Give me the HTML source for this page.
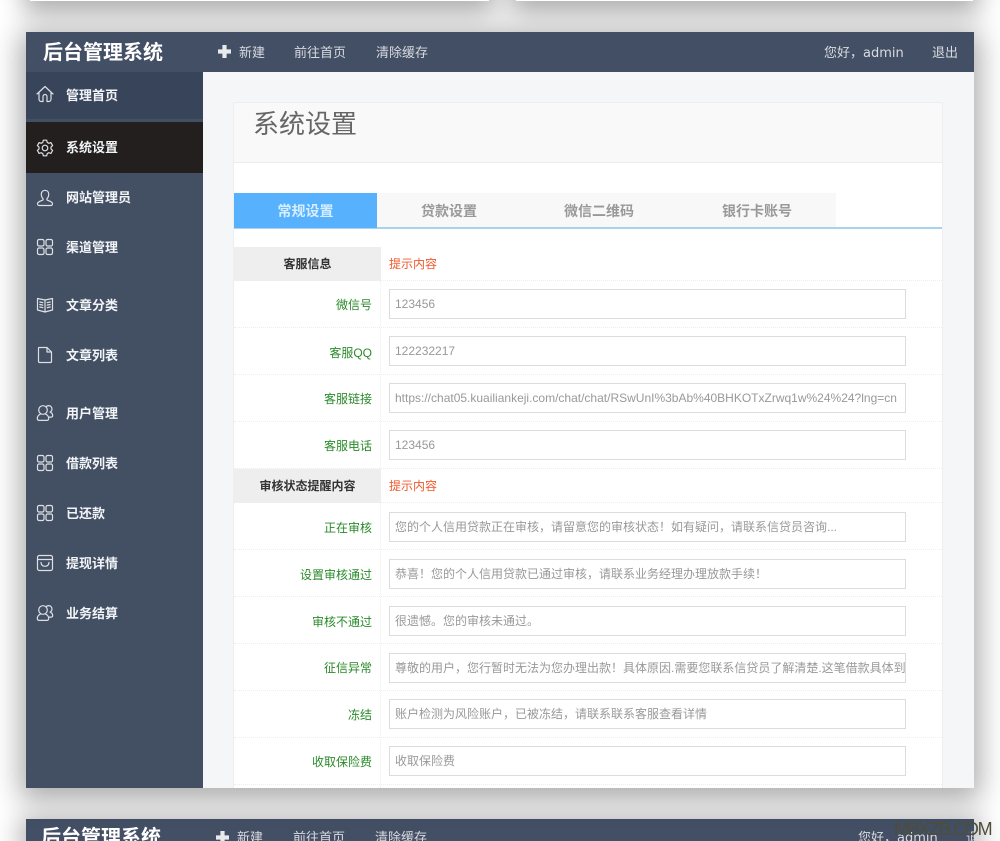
<!DOCTYPE html>
<html lang="zh-CN">
<head>
<meta charset="utf-8">
<title>后台管理系统</title>
<style>
html,body{margin:0;padding:0;background:#fff;width:1000px;height:841px;overflow:hidden}
body{font-family:"Liberation Sans","Noto Sans CJK SC",sans-serif}
#wrap{position:absolute;left:0;top:0;width:1000px;height:841px;overflow:hidden;background:#fff}
#wrap div,#wrap span,#wrap svg{position:absolute;box-sizing:border-box}
.t{white-space:nowrap}
.card{background:#fff;box-shadow:0 6px 26px 6px rgba(0,0,0,.33)}
.bar{background:#434f64}
.side{left:26px;top:72px;width:177px;height:716px;background:#434f63}
.m{left:66px;height:20px;line-height:20px;font-size:13px;font-weight:bold;color:#f2f5f7}
.i{left:36px;width:18px;height:18px;fill:none;stroke:#dde0e5;stroke-width:1.2;stroke-linecap:round;stroke-linejoin:round}
.n{height:20px;line-height:20px;font-size:13px;color:#d8dbe0;font-family:"DejaVu Sans","Noto Sans CJK SC",sans-serif}
.r{left:234px;width:708px;height:47px;border-bottom:1px dotted #eeeeee;background:#fff}
.sep{left:380px;width:1px;border-left:1px dotted #efefef}
.l{left:234px;width:138px;text-align:right;height:20px;line-height:20px;font-size:12px;color:#2a8a2a}
.h{left:234px;width:147px;background:#eeeeee;color:#333;font-size:12px;font-weight:bold;text-align:center}
.tip{left:389px;height:20px;line-height:20px;font-size:12px;color:#f0582d}
.in{left:389px;width:517px;height:30px;border:1px solid #dcdcdc;background:#fff;color:#999;font-size:12px;line-height:28px;padding-left:5px;overflow:hidden;white-space:nowrap}
.tab{top:193px;height:34px;line-height:37px;font-size:14px;font-weight:bold;color:#999;text-align:center}
</style>
</head>
<body>
<div id="wrap">
<svg width="0" height="0" style="left:0;top:0">
<symbol id="grid" viewBox="0 0 18 18"><rect x="1.5" y="1.5" width="6.5" height="6.5" rx="1.6"/><rect x="10" y="1.5" width="6.5" height="6.5" rx="1.6"/><rect x="1.5" y="10" width="6.5" height="6.5" rx="1.6"/><rect x="10" y="10" width="6.5" height="6.5" rx="1.6"/></symbol>
<symbol id="users" viewBox="0 0 18 18"><circle cx="7" cy="6" r="4.3"/><path d="M4.6 10C2.4 11 1.3 12.6 1.3 14.4c0 1.3.8 2 2 2h7.4c1.2 0 2-.7 2-2 0-1.8-1.1-3.4-3.3-4.4"/><path d="M10.2 2.6c.7-.7 1.6-1 2.4-1 2 0 3.4 1.6 3.4 3.4 0 1.4-.8 2.5-1.9 3.1 1.6.7 2.6 2 2.6 3.4 0 1-.6 1.6-1.6 1.6h-2"/></symbol>
</svg>

<!-- top fragments -->
<div class="card" style="left:30px;top:-40px;width:459px;height:41px"></div>
<div class="card" style="left:516px;top:-40px;width:457px;height:41px"></div>

<!-- bottom fragment -->
<div class="card bar" style="left:26px;top:819px;width:948px;height:22px"></div>

<!-- main card -->
<div class="card" style="left:26px;top:32px;width:948px;height:756px;background:#f5f6f8"></div>

<div class="t" style="left:41px;top:824px;font-size:20px;font-weight:bold;line-height:28px;color:#fff">后台管理系统</div>
<svg style="left:216px;top:831px" width="13" height="13" viewBox="0 0 13 13"><path d="M4.4 0h4.2v4.400H13v4.200H8.600V13H4.400V8.600H0V4.400h4.400z" fill="#e8e9ea"/></svg>
<div class="t n" style="left:237px;top:829px">新建</div>
<div class="t n" style="left:293px;top:829px">前往首页</div>
<div class="t n" style="left:375px;top:829px">清除缓存</div>
<div class="t n" style="left:858px;top:829px">您好，admin</div>
<div class="t n" style="left:966px;top:829px">退</div>
<div class="t" style="left:894px;top:819px;font-size:18px;line-height:21px;color:#4d4d3a;letter-spacing:-1.3px">MBXZB.COM</div>

<!-- top bar -->
<div class="bar" style="left:26px;top:32px;width:948px;height:40px"></div>
<div class="t" style="left:43px;top:39px;font-size:20px;font-weight:bold;line-height:28px;color:#fff">后台管理系统</div>
<svg style="left:218px;top:45px" width="13" height="13" viewBox="0 0 13 13"><path d="M4.4 0h4.2v4.400H13v4.200H8.600V13H4.400V8.600H0V4.400h4.400z" fill="#e8e9ea"/></svg>
<div class="t n" style="left:239px;top:44px">新建</div>
<div class="t n" style="left:294px;top:44px">前往首页</div>
<div class="t n" style="left:376px;top:44px">清除缓存</div>
<div class="t n" style="left:824px;top:44px">您好，admin</div>
<div class="t n" style="left:932px;top:44px">退出</div>

<!-- sidebar -->
<div class="side"></div>
<div style="left:26px;top:72px;width:177px;height:47px;background:#38445a"></div>
<div style="left:26px;top:122px;width:177px;height:51px;background:#231f1e"></div>

<svg class="i" style="top:85px" viewBox="0 0 18 18"><path d="M1 9 9 1.500 17 9M3 7.500V14c0 1.500.9 2.500 2.200 2.500H7V11.500c0-1.100.9-2 2-2s2 .9 2 2v5h1.800c1.300 0 2.200-1 2.200-2.500V7.500"/></svg>
<div class="t m" style="top:86px">管理首页</div>

<svg class="i" style="top:139px" viewBox="0 0 18 18"><path d="M7.300 1.200h3.400l.5 2.200 1.600.9 2.100-.7 1.700 3-1.600 1.500v1.800l1.600 1.500-1.700 3-2.100-.7-1.600.9-.5 2.200H7.300l-.5-2.200-1.600-.9-2.100.7-1.700-3 1.600-1.500V8.100L1.400 6.600l1.700-3 2.100.7 1.600-.9z"/><circle cx="9" cy="9" r="2.800"/></svg>
<div class="t m" style="top:138px">系统设置</div>

<svg class="i" style="top:189px" viewBox="0 0 18 18"><path d="M9 1.300c2.300 0 3.700 1.700 3.700 4 0 2-.7 3.500-1.800 4.500v1c0 .8 5.600 1.300 5.600 3.800 0 1.200-.6 1.900-1.800 1.900H3.300c-1.200 0-1.800-.7-1.800-1.900 0-2.500 5.600-3 5.600-3.800v-1C6 8.800 5.300 7.300 5.300 5.300c0-2.300 1.400-4 3.700-4z"/></svg>
<div class="t m" style="top:188px">网站管理员</div>

<svg class="i" style="top:238px"><use href="#grid"/></svg>
<div class="t m" style="top:238px">渠道管理</div>

<svg class="i" style="top:296px" viewBox="0 0 18 18"><path d="M1.500 2.500 9 4l7.500-1.500V14L9 16 1.500 14zM9 4v12M3.800 6l3 .6M3.800 8.500l3 .6M3.800 11l3 .6M14.200 6l-3 .6M14.200 8.500l-3 .6M14.200 11l-3 .6"/></svg>
<div class="t m" style="top:296px">文章分类</div>

<svg class="i" style="top:346px" viewBox="0 0 18 18"><path d="M3 1.500h8l4.500 4.500v9.500c0 .6-.4 1-1 1H3.500c-.6 0-1-.4-1-1V2c0-.3.2-.5.5-.5zM11 1.500V6h4.500"/></svg>
<div class="t m" style="top:346px">文章列表</div>

<svg class="i" style="top:404px"><use href="#users"/></svg>
<div class="t m" style="top:404px">用户管理</div>

<svg class="i" style="top:454px"><use href="#grid"/></svg>
<div class="t m" style="top:454px">借款列表</div>

<svg class="i" style="top:504px"><use href="#grid"/></svg>
<div class="t m" style="top:504px">已还款</div>

<svg class="i" style="top:554px" viewBox="0 0 18 18"><rect x="1.500" y="1.500" width="15" height="15" rx="1.800"/><path d="M1.500 5.500h15M5 8.500c.3 2.500 1.800 3.800 4 3.800s3.700-1.300 4-3.800"/></svg>
<div class="t m" style="top:554px">提现详情</div>

<svg class="i" style="top:604px"><use href="#users"/></svg>
<div class="t m" style="top:604px">业务结算</div>

<!-- panel -->
<div style="left:233px;top:102px;width:710px;height:686px;background:#fff;border:1px solid #eeeeee;border-bottom:0"></div>
<div style="left:234px;top:103px;width:708px;height:60px;background:#f9f9f9;border-bottom:1px solid #ececec"></div>
<div class="t" style="left:253px;top:107px;font-size:26px;line-height:34px;color:#666">系统设置</div>

<!-- tabs -->
<div style="left:377px;top:193px;width:459px;height:34px;background:#f8f8f8"></div>
<div style="left:234px;top:227px;width:708px;height:2px;background:#a6d4ee"></div>
<div class="tab" style="left:234px;width:143px;height:35px;background:#57b1fd;color:#d6eeff">常规设置</div>
<div class="tab" style="left:377px;width:144px">贷款设置</div>
<div class="tab" style="left:527px;width:144px">微信二维码</div>
<div class="tab" style="left:685px;width:144px">银行卡账号</div>

<!-- form rows -->
<div class="h" style="top:247px;height:34px;line-height:34px">客服信息</div>
<div style="left:234px;top:280px;width:708px;border-bottom:1px dotted #eee;height:1px"></div>
<div class="tip t" style="top:254px">提示内容</div>

<div class="r" style="top:281px"></div>
<div class="r" style="top:328px"></div>
<div class="r" style="top:375px"></div>
<div class="r" style="top:422px"></div>

<div class="h" style="top:469px;height:34px;line-height:34px">审核状态提醒内容</div>
<div class="tip t" style="top:476px">提示内容</div>
<div style="left:234px;top:502px;width:708px;border-bottom:1px dotted #eee;height:1px"></div>

<div class="r" style="top:503px"></div>
<div class="r" style="top:550px"></div>
<div class="r" style="top:597px"></div>
<div class="r" style="top:644px"></div>
<div class="r" style="top:691px"></div>
<div class="r" style="top:738px"></div>
<div class="sep" style="top:281px;height:188px"></div>
<div class="sep" style="top:503px;height:285px"></div>

<div class="l t" style="top:295px">微信号</div>
<div class="in" style="top:289px">123456</div>
<div class="l t" style="top:343px">客服QQ</div>
<div class="in" style="top:336px">122232217</div>
<div class="l t" style="top:389px">客服链接</div>
<div class="in" style="top:383px">https://chat05.kuailiankeji.com/chat/chat/RSwUnI%3bAb%40BHKOTxZrwq1w%24%24?lng=cn</div>
<div class="l t" style="top:436px">客服电话</div>
<div class="in" style="top:430px">123456</div>

<div class="l t" style="top:518px">正在审核</div>
<div class="in" style="top:512px">您的个人信用贷款正在审核，请留意您的审核状态！如有疑问，请联系信贷员咨询...</div>
<div class="l t" style="top:565px">设置审核通过</div>
<div class="in" style="top:559px">恭喜！您的个人信用贷款已通过审核，请联系业务经理办理放款手续！</div>
<div class="l t" style="top:612px">审核不通过</div>
<div class="in" style="top:606px">很遗憾。您的审核未通过。</div>
<div class="l t" style="top:658px">征信异常</div>
<div class="in" style="top:653px">尊敬的用户，您行暂时无法为您办理出款！具体原因.需要您联系信贷员了解清楚.这笔借款具体到</div>
<div class="l t" style="top:705px">冻结</div>
<div class="in" style="top:699px">账户检测为风险账户，已被冻结，请联系联系客服查看详情</div>
<div class="l t" style="top:752px">收取保险费</div>
<div class="in" style="top:746px">收取保险费</div>
</div>
</body>
</html>
